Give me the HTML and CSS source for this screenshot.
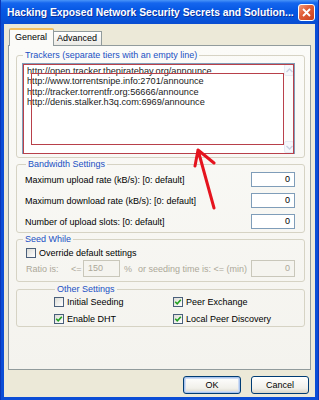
FILE: index.html
```html
<!DOCTYPE html>
<html lang="en">

<head>
    <meta charset="UTF-8">
    <title>Hacking Exposed Network Security Secrets and Solutions</title>
    <link rel="stylesheet" href="styles.css">
</head>

<body>
    <div class="window">
        <div class="titlebar">
            <span class="title">Hacking Exposed Network Security Secrets and Solution...</span>
            <span class="close">
                <svg width="9" height="9" viewBox="0 0 9 9"><path d="M1 1 L8 8 M8 1 L1 8" stroke="#fff" stroke-width="1.8" /></svg>
            </span>
        </div>

        <div class="client">
            <div class="tabs">
                <div class="tab tab--active">General</div>
                <div class="tab">Advanced</div>
            </div>

            <div class="page">
                <fieldset class="group group--trackers">
                    <legend>Trackers (separate tiers with an empty line)</legend>
                    <div class="trackers">
                        <div class="trackers__list">
                            <div>http://open.tracker.thepiratebay.org/announce</div>
                            <div>http://www.torrentsnipe.info:2701/announce</div>
                            <div>http://tracker.torrentfr.org:56666/announce</div>
                            <div>http://denis.stalker.h3q.com:6969/announce</div>
                        </div>
                        <div class="scrollbar">
                            <div class="scrollbar__btn">
                                <svg width="7" height="5" viewBox="0 0 7 5"><path d="M0.5 4 L3.5 1 L6.5 4" fill="none" stroke="#c9d2e2" stroke-width="1.4" /></svg>
                            </div>
                            <div class="scrollbar__btn">
                                <svg width="7" height="5" viewBox="0 0 7 5"><path d="M0.5 1 L3.5 4 L6.5 1" fill="none" stroke="#c9d2e2" stroke-width="1.4" /></svg>
                            </div>
                        </div>
                    </div>
                </fieldset>

                <fieldset class="group group--bandwidth">
                    <legend>Bandwidth Settings</legend>
                    <div class="row">
                        <span>Maximum upload rate (kB/s): [0: default]</span>
                        <span class="field">0</span>
                    </div>
                    <div class="row">
                        <span>Maximum download rate (kB/s): [0: default]</span>
                        <span class="field">0</span>
                    </div>
                    <div class="row">
                        <span>Number of upload slots: [0: default]</span>
                        <span class="field">0</span>
                    </div>
                </fieldset>

                <fieldset class="group group--seed">
                    <legend>Seed While</legend>
                    <div class="check check--seed">
                        <span class="check__box"></span>
                        <span>Override default settings</span>
                    </div>
                    <div class="ratio">
                        <span class="ratio__label">Ratio is:</span>
                        <span class="ratio__le">&lt;=</span>
                        <span class="field field--disabled field--ratio">150</span>
                        <span class="ratio__pct">%</span>
                        <span class="ratio__time">or seeding time is: &lt;= (min)</span>
                        <span class="field field--disabled">0</span>
                    </div>
                </fieldset>

                <fieldset class="group group--other">
                    <legend>Other Settings</legend>
                    <div class="options">
                        <div class="check">
                            <span class="check__box"></span>
                            <span>Initial Seeding</span>
                        </div>
                        <div class="check">
                            <span class="check__box"><svg width="8" height="8" viewBox="0 0 8 8"><path d="M1.2 3.8 L3.2 5.8 L6.8 1.8" fill="none" stroke="#21a121" stroke-width="1.6" /></svg></span>
                            <span>Peer Exchange</span>
                        </div>
                        <div class="check">
                            <span class="check__box"><svg width="8" height="8" viewBox="0 0 8 8"><path d="M1.2 3.8 L3.2 5.8 L6.8 1.8" fill="none" stroke="#21a121" stroke-width="1.6" /></svg></span>
                            <span>Enable DHT</span>
                        </div>
                        <div class="check">
                            <span class="check__box"><svg width="8" height="8" viewBox="0 0 8 8"><path d="M1.2 3.8 L3.2 5.8 L6.8 1.8" fill="none" stroke="#21a121" stroke-width="1.6" /></svg></span>
                            <span>Local Peer Discovery</span>
                        </div>
                    </div>
                </fieldset>
            </div>

            <div class="buttons">
                <button class="btn btn--default">OK</button>
                <button class="btn">Cancel</button>
            </div>
        </div>

        <!-- red annotation drawn over the screenshot -->
        <div class="mark mark--outer"></div>
        <div class="mark mark--inner"></div>
        <svg class="arrow" width="30" height="70" viewBox="185 145 30 70">
            <path d="M213 208 L197 150 M194 166 L197 150 L213 163" fill="none" stroke="#e5141e" stroke-width="3" stroke-linecap="round" stroke-linejoin="round" />
        </svg>
    </div>
</body>

</html>
```

FILE: styles.css
```css
body {
    margin: 0;
    padding: 0;
    font-family: 'Liberation Sans', Arial, sans-serif;
    font-size: 9px;
    color: #000;
    background: #fff;
}

.window {
    position: relative;
    width: 319px;
    height: 400px;
    display: flex;
    flex-direction: column;
    background: #0b4dd6;
    box-sizing: border-box;
    border-left: 1px solid #0a36b8;
    border-right: 1px solid #0a36b8;
}

.titlebar {
    flex: none;
    height: 24px;
    display: flex;
    align-items: center;
    padding: 0 3px 0 6px;
    background: linear-gradient(to bottom, #4a95f8 0, #1566ee 3px, #0658e4 10px, #0554dc 18px, #0a4cd0 24px);
    color: #fff;
}

.title {
    flex: 1;
    white-space: nowrap;
    font-weight: bold;
    font-size: 10.3px;
    text-shadow: 1px 1px 0 #0b2f9a;
}

.close {
    width: 15px;
    height: 15px;
    display: flex;
    align-items: center;
    justify-content: center;
    border: 1px solid #fff;
    border-radius: 3px;
    background: linear-gradient(135deg, #f39a7c 0, #e2603a 40%, #c8401c 100%);
}

.client {
    flex: 1;
    display: flex;
    flex-direction: column;
    margin: 0 3px 3px 3px;
    padding: 4px 4px 0 4px;
    background: #ece9d8;
}

.tabs {
    display: flex;
    align-items: flex-end;
    height: 17px;
    padding-left: 1px;
}

.tab {
    box-sizing: border-box;
    height: 14px;
    line-height: 13px;
    padding: 0 4px 0 3px;
    border: 1px solid #919b9c;
    border-bottom: none;
    border-left: none;
    background: linear-gradient(to bottom, #ffffff, #ecebe6);
}

.tab--active {
    position: relative;
    z-index: 1;
    height: 18px;
    margin-bottom: -1px;
    padding: 0 6px 0 5px;
    line-height: 15px;
    border-left: 1px solid #919b9c;
    border-top: 2px solid #f3c060;
    border-radius: 2px 2px 0 0;
    background: #fbfbf8;
}

.page {
    box-sizing: border-box;
    height: 325px;
    padding: 4px 5px 0 7px;
    border: 1px solid #919b9c;
    background: linear-gradient(to bottom, #fbfbf8, #f4f3ee);
}

.group {
    margin: 0;
    padding: 0 5px;
    border: 1px solid #d6d3c4;
    border-radius: 3px;
}

.group legend {
    padding: 0 2px;
    margin-left: 1px;
    line-height: 11px;
    color: #2150c4;
}

.group--trackers {
    padding: 2px 9px 3px 5px;
}

.trackers {
    position: relative;
    height: 91px;
    box-sizing: border-box;
    border: 1px solid #7f9db9;
    background: #fff;
    display: flex;
}

.trackers__list {
    flex: 1;
    padding: 2px 0 0 4px;
    line-height: 10.4px;
    font-size: 9.2px;
    color: #1a1a1a;
}

.scrollbar {
    width: 10px;
    display: flex;
    flex-direction: column;
    justify-content: space-between;
    background: #fcfcfb;
}

.scrollbar__btn {
    height: 10px;
    display: flex;
    align-items: center;
    justify-content: center;
    border: 1px solid #e6ebf3;
    border-radius: 2px;
    background: #f6f8fc;
}

.group--bandwidth {
    margin-top: 1px;
    padding: 1px 9px 2px 8px;
}

.row {
    height: 17px;
    display: flex;
    align-items: center;
    justify-content: space-between;
}

.row+.row {
    margin-top: 4px;
}

.field {
    box-sizing: border-box;
    width: 44px;
    height: 15px;
    padding-right: 4px;
    border: 1px solid #7f9db9;
    background: #fff;
    text-align: right;
    line-height: 13px;
}

.field--disabled {
    height: 17px;
    line-height: 15px;
    border-color: #c9c7ba;
    background: #f5f4ef;
    color: #aca899;
}

.group--seed {
    margin-top: 1px;
    padding: 1px 9px 4px 5px;
}

.check {
    height: 13px;
    display: flex;
    align-items: center;
}

.check--seed {
    margin-left: 4px;
}

.check__box {
    box-sizing: border-box;
    width: 10px;
    height: 10px;
    margin-right: 3px;
    display: flex;
    align-items: center;
    justify-content: center;
    border: 1px solid #4a5f7a;
    background: linear-gradient(135deg, #dcdcd6, #ffffff);
}

.ratio {
    height: 17px;
    margin-top: 1px;
    display: flex;
    align-items: center;
    color: #aca899;
}

.ratio__label {
    margin-left: 4px;
    width: 45px;
}

.ratio__le {
    width: 12px;
}

.field--ratio {
    width: 37px;
    text-align: left;
    padding-left: 4px;
}

.ratio__pct {
    margin-left: 4px;
    width: 14px;
}

.ratio__time {
    flex: 1;
}

.group--other {
    margin-top: 2px;
    padding: 0 5px 1px 37px;
}

.options {
    display: grid;
    grid-template-columns: 119px auto;
    row-gap: 4px;
}

.buttons {
    display: flex;
    justify-content: flex-end;
    gap: 10px;
    padding: 6px 2px 0 0;
}

.btn {
    box-sizing: border-box;
    width: 58px;
    height: 18px;
    padding: 0;
    border: 1px solid #003c74;
    border-radius: 3px;
    background: linear-gradient(to bottom, #ffffff, #f1f0ea 70%, #d8d5c8);
    font-family: inherit;
    font-size: 9px;
    color: #000;
}

.btn--default {
    box-shadow: inset 0 0 0 1px #a9c4ee, inset 0 0 0 2px #cfdcf3;
}

.mark {
    position: absolute;
    box-sizing: border-box;
    border: 1px solid #b8404a;
}

.mark--outer {
    left: 22px;
    top: 64px;
    width: 271px;
    height: 90px;
}

.mark--inner {
    left: 30px;
    top: 73px;
    width: 253px;
    height: 72px;
}

.arrow {
    position: absolute;
    left: 185px;
    top: 145px;
}
```
